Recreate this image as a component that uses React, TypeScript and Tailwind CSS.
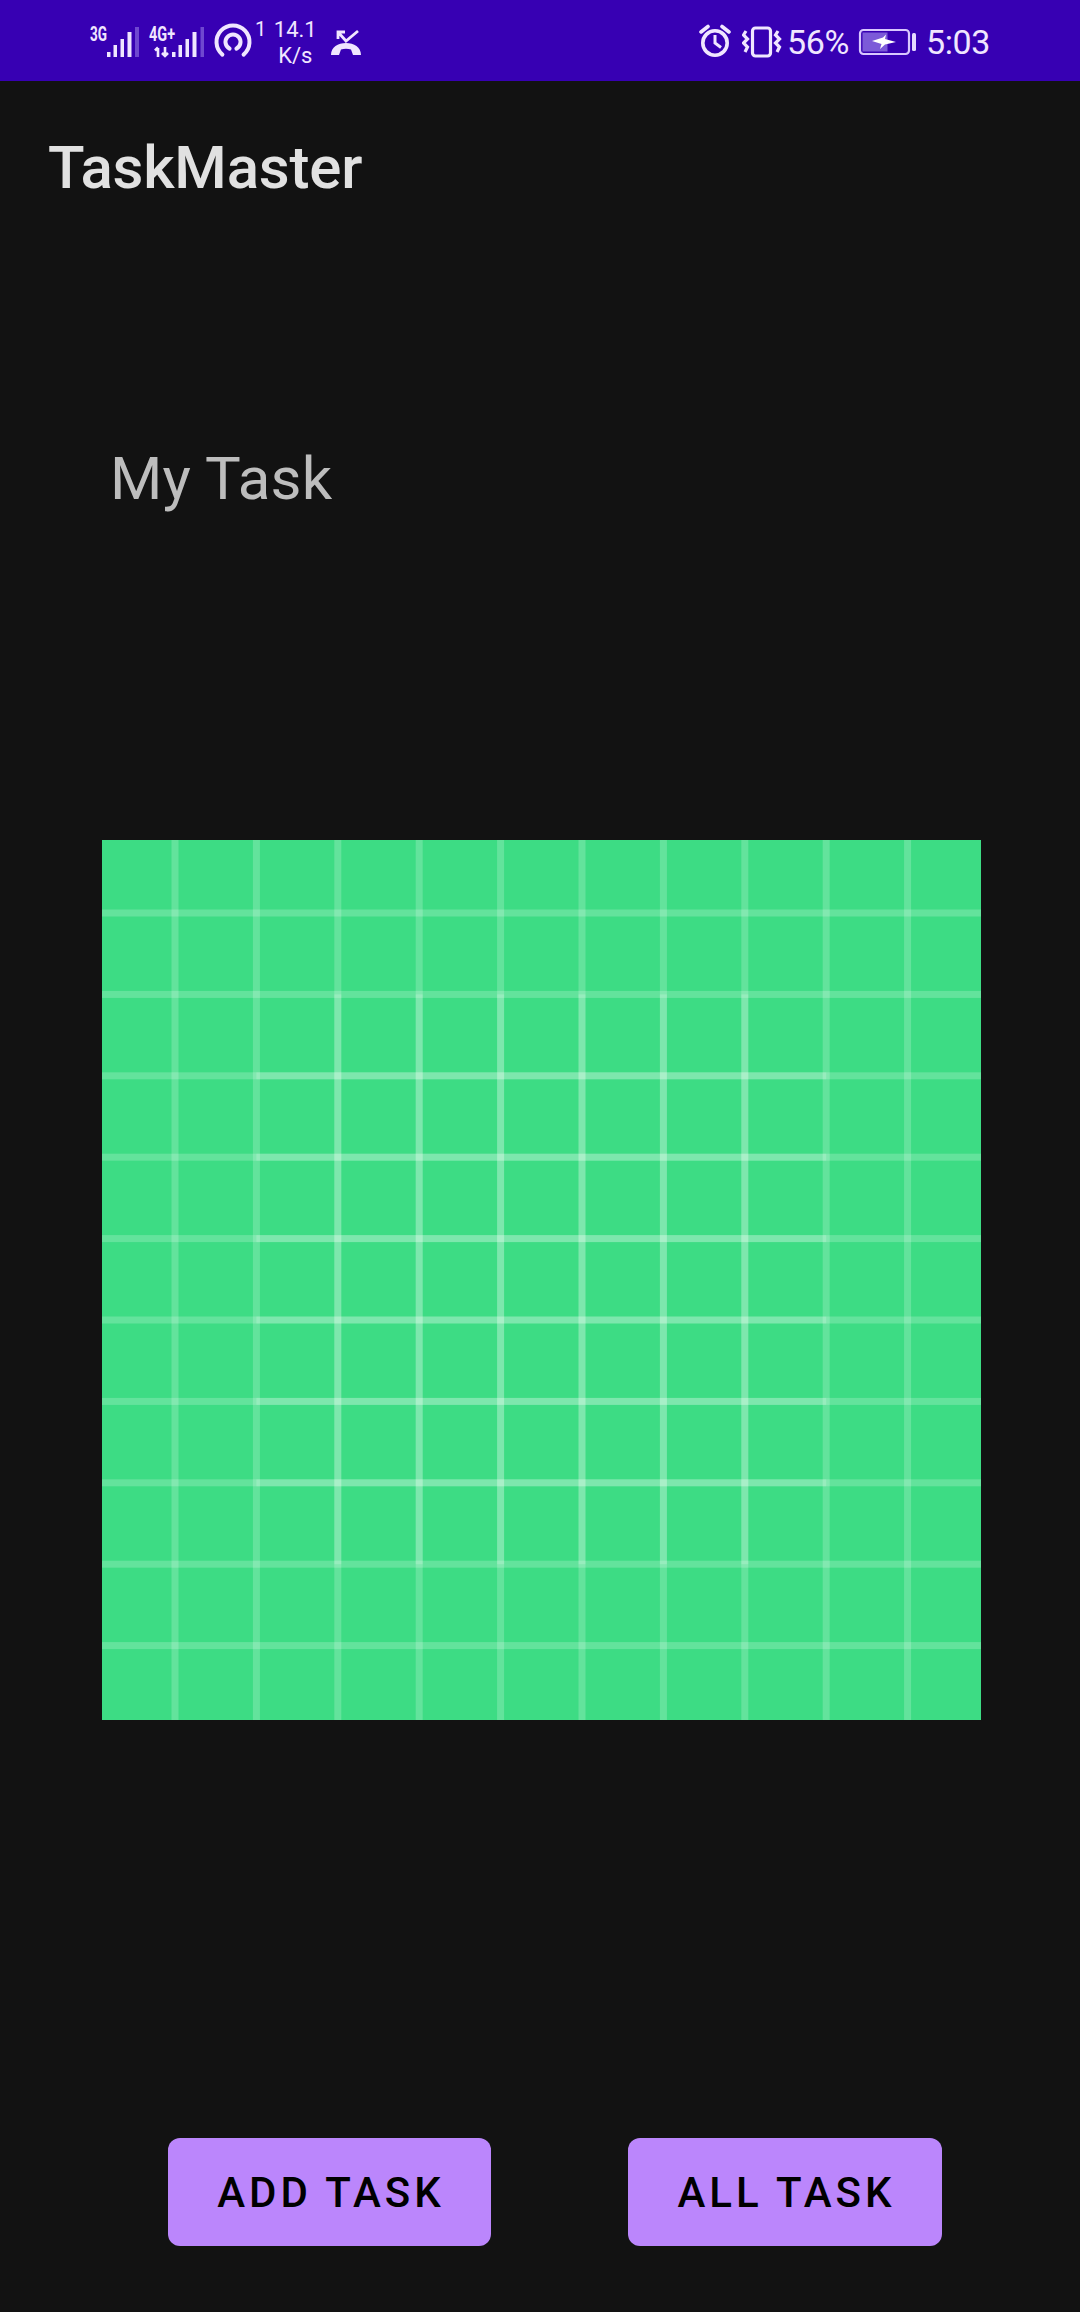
const gridLines = [0, 1, 2, 3, 4, 5, 6, 7, 8, 9].map((i) => 73 + i * 81.4);

function SignalIcons() {
  const bars = [
    [107, 50, 3.5, 5],
    [113.5, 43, 3.5, 12],
    [120.5, 37, 3.5, 18],
    [127.5, 30, 4, 25],
    [172, 50, 3.5, 5],
    [178.5, 43, 3.5, 12],
    [185.5, 37, 3.5, 18],
    [192.5, 30, 4, 25],
  ];
  return (
    <svg width="118" height="40" viewBox="88 20 118 40" className="shrink-0">
      <text x="90" y="39" fontFamily="Roboto" fontWeight="700" fontSize="20" fill="#f0e6ff" textLength="17" lengthAdjust="spacingAndGlyphs">3G</text>
      <text x="149" y="39" fontFamily="Roboto" fontWeight="700" fontSize="20" fill="#f0e6ff" textLength="26" lengthAdjust="spacingAndGlyphs">4G+</text>
      {bars.map(([x, y, w, h]) => (
        <rect key={x} x={x} y={y} width={w} height={h} fill="#f0e6ff" />
      ))}
      <rect x="135" y="25" width="4" height="30" fill="#6f48d0" />
      <rect x="200.5" y="25" width="3.5" height="30" fill="#6f48d0" />
      <path d="M158 55V46M155 48.5L158 45.5M165 45V54M162 51L165 54L168 51" stroke="#f0e6ff" strokeWidth="2.6" fill="none" />
    </svg>
  );
}

function HotspotIcon() {
  return (
    <svg width="40" height="40" viewBox="-20 -20 40 40" fill="none" stroke="#f0e6ff" strokeWidth="4" strokeLinecap="round" className="shrink-0">
      <path d="M-10.6 12.6A16.5 16.5 0 1 1 10.6 12.6" />
      <path d="M-3.4 6.6A7.5 7.5 0 1 1 3.4 6.6" />
    </svg>
  );
}

function MissedCallIcon() {
  return (
    <svg width="34" height="30" viewBox="329 27 34 30" className="shrink-0">
      <path d="M345 31H338V38M338 31L346 40L358 30" stroke="#f0e6ff" strokeWidth="2.8" fill="none" />
      <path d="M331 54C331 46 338 42 346 42C354 42 361 46 361 54L353 54L351 48.5C348 47.5 344 47.5 341 48.5L339 54Z" fill="#f0e6ff" />
    </svg>
  );
}

function AlarmIcon() {
  return (
    <svg width="36" height="36" viewBox="697 24 36 36" fill="none" stroke="#f0e6ff" strokeWidth="3.6" className="shrink-0">
      <circle cx="715" cy="43" r="12.2" />
      <path d="M701 32L708 26.5M722 26.5L729 32" strokeLinecap="round" />
      <path d="M715 35V43L721 47.5" strokeWidth="3" />
    </svg>
  );
}

function VibrateIcon() {
  return (
    <svg width="40" height="32" viewBox="742 24 40 32" fill="none" stroke="#f0e6ff" strokeWidth="3.2" className="shrink-0">
      <rect x="752.5" y="26" width="18" height="28" rx="3" />
      <path d="M746 29L743.5 33L747.5 37L743.5 41L747.5 45L745 50" />
      <path d="M778 29L775.5 33L779.5 37L775.5 41L779.5 45L777 50" />
    </svg>
  );
}

function BatteryIcon() {
  return (
    <svg width="58" height="28" viewBox="859 27 58 28" className="shrink-0">
      <rect x="861" y="29" width="49" height="24" rx="3.5" fill="none" stroke="#d9c7ff" strokeWidth="2.2" />
      <rect x="863.5" y="31.5" width="25" height="19" fill="#7c5ad8" />
      <rect x="913" y="32" width="4" height="18" rx="1.5" fill="#e6d9ff" />
      <path d="M873 40L884 36.5L887 33.5L886 38L897 41L886 43.5L881 48L882.5 43Z" fill="#ffffff" />
    </svg>
  );
}

function StatusBar() {
  return (
    <div className="flex h-[81px] items-center bg-[#3700b3] pl-[88px] pt-[2px] text-[#f0e6ff] font-['Roboto',sans-serif]">
      <SignalIcons />
      <div className="ml-[7px]">
        <HotspotIcon />
      </div>
      <span className="ml-[2px] mb-[26px] text-[20px] leading-[24px]">1</span>
      <div className="ml-[7px] flex w-[44px] flex-col items-center text-[22px] leading-[26px] pt-[2px]">
        <span>14.1</span>
        <span>K/s</span>
      </div>
      <div className="ml-[12px] mt-[2px]">
        <MissedCallIcon />
      </div>
      <div className="ml-auto flex items-center pr-[90px]">
        <AlarmIcon />
        <div className="ml-[9px]">
          <VibrateIcon />
        </div>
        <span className="ml-[5px] text-[34px] leading-[40px] tracking-[-0.4px]">56%</span>
        <div className="ml-[9px]">
          <BatteryIcon />
        </div>
        <span className="ml-[10px] text-[34px] leading-[40px] tracking-[-0.4px]">5:03</span>
      </div>
    </div>
  );
}

function GridPicture() {
  return (
    <svg width="879" height="880" viewBox="0 0 879 880" className="block">
      <defs>
        <filter id="soft" x="-5%" y="-5%" width="110%" height="110%">
          <feGaussianBlur stdDeviation="0.7" />
        </filter>
      </defs>
      <rect width="879" height="880" fill="#3ddc84" />
      <g filter="url(#soft)" fill="#ffffff">
        {gridLines.map((p, i) => (
          <g key={i}>
            <rect x={p - 3.5} y="0" width="7" height="880" opacity="0.2" />
            <rect x="0" y={p - 3.5} width="879" height="7" opacity="0.2" />
            {i >= 2 && i <= 7 && (
              <>
                <rect x={p - 3.5} y={gridLines[1]} width="7" height={gridLines[8] - gridLines[1]} opacity="0.17" />
                <rect x={gridLines[1]} y={p - 3.5} width={gridLines[8] - gridLines[1]} height="7" opacity="0.17" />
              </>
            )}
          </g>
        ))}
      </g>
    </svg>
  );
}

export default function App() {
  return (
    <div className="flex h-[2312px] w-[1080px] flex-col bg-[#121212] font-['Roboto',sans-serif]">
      <StatusBar />

      <div className="flex h-[173px] items-center pl-[48px]">
        <h1 className="text-[60px] leading-[70px] font-medium tracking-[-0.2px] text-[#e1e1e1]">TaskMaster</h1>
      </div>

      <p className="mt-[190px] pl-[110px] text-[60px] leading-[70px] tracking-[0.2px] text-[#bdbdbd]">My Task</p>

      <div className="mt-[326px] pl-[102px]">
        <GridPicture />
      </div>

      <div className="mt-[418px] flex gap-[137px] pl-[168px]">
        <button type="button" className="flex h-[108px] w-[323px] items-center justify-center rounded-[12px] bg-[#bb86fc] pl-[3px] text-[42px] font-medium tracking-[4px] text-black">
          ADD TASK
        </button>
        <button type="button" className="flex h-[108px] w-[314px] items-center justify-center rounded-[12px] bg-[#bb86fc] pl-[3px] text-[42px] font-medium tracking-[4px] text-black">
          ALL TASK
        </button>
      </div>
    </div>
  );
}
